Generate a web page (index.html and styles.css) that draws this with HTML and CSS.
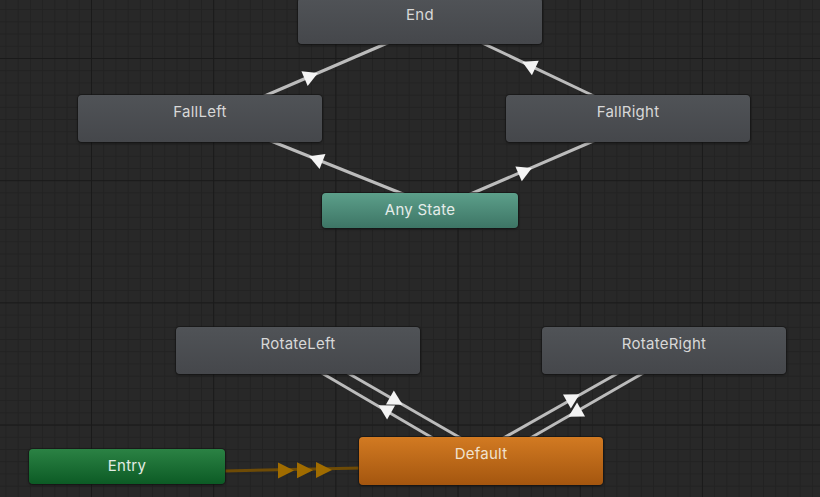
FILE: index.html
```html
<!DOCTYPE html>
<html>
<head>
<meta charset="utf-8">
<link rel="stylesheet" href="styles.css">
</head>
<body>
<div class="canvas">
  <svg class="edges" width="820" height="497" viewBox="0 0 820 497">
    <g class="edge">
      <line x1="260" y1="98" x2="392" y2="41"/>
      <line x1="478" y1="41" x2="598" y2="98"/>
      <line x1="266" y1="139" x2="408" y2="196"/>
      <line x1="466" y1="196" x2="598" y2="139"/>
      <line x1="320" y1="372" x2="436" y2="440"/>
      <line x1="346" y1="372" x2="464" y2="440"/>
      <line x1="500" y1="440" x2="620" y2="372"/>
      <line x1="527" y1="440" x2="645" y2="372"/>
    </g>
    <g class="arrow">
      <polygon points="7.5,0 -7,-8 -7,8" transform="translate(311 76) rotate(-23)"/>
      <polygon points="7.5,0 -7,-8 -7,8" transform="translate(529 65) rotate(-154.7)"/>
      <polygon points="7.5,0 -7,-8 -7,8" transform="translate(316 159) rotate(-158.5)"/>
      <polygon points="7.5,0 -7,-8 -7,8" transform="translate(525 171) rotate(-23.6)"/>
      <polygon points="7.5,0 -7,-8 -7,8" transform="translate(385 409) rotate(-150.1)"/>
      <polygon points="7.5,0 -7,-8 -7,8" transform="translate(396 401) rotate(29.4)"/>
      <polygon points="7.5,0 -7,-8 -7,8" transform="translate(573 398) rotate(-29.4)"/>
      <polygon points="7.5,0 -7,-8 -7,8" transform="translate(575 413) rotate(150.1)"/>
    </g>
    <line class="entry-edge" x1="224" y1="471" x2="362" y2="468"/>
    <g class="entry-arrow">
      <polygon points="278,462.5 294,470.5 278,478.5"/>
      <polygon points="297,462.3 313,470.3 297,478.3"/>
      <polygon points="316,462 332,470 316,478"/>
    </g>
  </svg>

  <div class="node gray n-end">End</div>
  <div class="node gray n-fallleft">FallLeft</div>
  <div class="node gray n-fallright">FallRight</div>
  <div class="node any n-any">Any State</div>
  <div class="node gray n-rotleft">RotateLeft</div>
  <div class="node gray n-rotright">RotateRight</div>
  <div class="node entry n-entry">Entry</div>
  <div class="node default n-default">Default</div>
</div>
</body>
</html>
```
FILE: styles.css
```css
html, body {
  margin: 0;
  padding: 0;
  background: #282828;
}

.canvas {
  position: relative;
  width: 820px;
  height: 497px;
  overflow: hidden;
  background-color: #282828;
  background-image:
    linear-gradient(to right, #1a1a1a 1px, transparent 1px),
    linear-gradient(to bottom, #1a1a1a 1px, transparent 1px),
    linear-gradient(to right, #222222 1px, transparent 1px),
    linear-gradient(to bottom, #222222 1px, transparent 1px);
  background-size:
    122.2px 122.2px,
    122.2px 122.2px,
    12.22px 12.22px,
    12.22px 12.22px;
  background-position: 91px 58px;
  font-family: Inter, "Noto Sans", sans-serif;
}

.edges {
  position: absolute;
  left: 0;
  top: 0;
}

.edge line {
  stroke: #bcbcbc;
  stroke-width: 3;
}

.arrow polygon {
  fill: #f4f4f4;
}

.entry-edge {
  stroke: #6e4b06;
  stroke-width: 3;
}

.entry-arrow polygon {
  fill: #a06c00;
}

.node {
  position: absolute;
  box-sizing: border-box;
  border-radius: 4px;
  text-align: center;
  font-size: 15px;
  letter-spacing: 0.25px;
  line-height: 18px;
  padding-top: 8px;
  color: #d8d8d8;
  box-shadow: 0 0 0 1px rgba(20, 20, 20, 0.6), 0 1px 3px rgba(0, 0, 0, 0.45);
}

.gray {
  width: 244px;
  height: 47px;
  background: linear-gradient(to bottom, #505357, #45474b);
}

.any {
  width: 196px;
  height: 35px;
  background: linear-gradient(to bottom, #5c9f8a, #3d7565);
  color: #e4ece9;
}

.entry {
  width: 196px;
  height: 35px;
  background: linear-gradient(to bottom, #2b8244, #0c5b25);
  color: #e2ece4;
}

.default {
  width: 244px;
  height: 48px;
  background: linear-gradient(to bottom, #d27a22, #a4560f);
  color: #f1e2cf;
}

.n-end { left: 298px; top: -2px; height: 46px; }
.n-fallleft { left: 78px; top: 95px; }
.n-fallright { left: 506px; top: 95px; }
.n-any { left: 322px; top: 193px; }
.n-rotleft { left: 176px; top: 327px; }
.n-rotright { left: 542px; top: 327px; }
.n-entry { left: 29px; top: 449px; }
.n-default { left: 359px; top: 437px; }
```
